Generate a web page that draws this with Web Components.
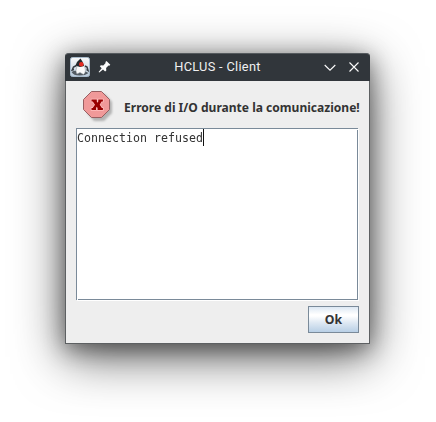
<!DOCTYPE html>
<html lang="it">
<head>
<meta charset="utf-8">
<title>HCLUS - Client</title>
<style>
html,body{margin:0;background:#fff}
body{width:436px;height:422px;overflow:hidden;box-sizing:border-box;padding:53px 0 0 65px;font-family:"Noto Sans",sans-serif}
</style>
</head>
<body>
<dialog-window>
  <title-bar slot="title">HCLUS - Client</title-bar>
  <error-message>Errore di I/O durante la comunicazione!</error-message>
  <text-pane>Connection refused</text-pane>
  <metal-button>Ok</metal-button>
</dialog-window>
<script>
const define = (name, html) => customElements.define(name, class extends HTMLElement {
  constructor() {
    super();
    this.attachShadow({mode: 'open'}).innerHTML = html;
  }
});

define('dialog-window', `<style>
:host{display:flex;flex-direction:column;box-sizing:border-box;width:305px;height:291px;background:#eee;border:1px solid #5d6062;border-top:0;border-radius:4px 4px 0 0;box-shadow:0 13px 50px rgba(0,0,0,.62),0 5px 22px rgba(0,0,0,.42)}
main{flex:1;display:flex;flex-direction:column;padding:0 10px 10px}
</style><slot name="title"></slot><main><slot></slot></main>`);

define('title-bar', `<style>
:host{display:grid;grid-template-columns:20px 20px 1fr 20px 20px;column-gap:4px;align-items:center;height:28px;box-sizing:border-box;margin:0 -1px;padding:0 5px;background:#31363b;border-top:1px solid #555a5e;border-radius:4px 4px 0 0;color:#eff0f1;font:12.800px/24px Roboto,sans-serif;letter-spacing:.3px}
span{text-align:center;white-space:nowrap;padding-bottom:2px}
svg{display:block;margin-top:-1px}
</style>
<svg width="20" height="20" viewBox="0 0 20 20">
<defs><linearGradient id="g" x2="0" y2="1"><stop stop-color="#fafafa"/><stop offset="1" stop-color="#b9cadb"/></linearGradient></defs>
<rect x=".5" y=".5" width="19" height="19" rx="2" fill="url(#g)" stroke="#a9bccd"/>
<path d="M1.500 15q3-2 6-1h7l4 2q-3 2.500-9 2.500-6 0-8-3.500z" fill="#40464c" opacity=".85"/>
<path d="M6.500 8.500L3.500 10l-1.300 3 1.800-.5M15 9l2 1 1 3.500-1.500-1" fill="none" stroke="#363d43" stroke-width="1.500"/>
<path d="M7 9q-2 5 0 8l3-1.500 3.500 2q3.500-3 .5-9z" fill="#fafafa" stroke="#8a9298" stroke-width=".5"/>
<path d="M10.500 1.500q2.500 3 3.500 7.500l-4 1-4.500-1.500q1-4 5-7z" fill="#24292d"/>
<circle cx="11.300" cy="7.300" r="2.300" fill="#e52b22"/>
</svg>
<svg width="20" height="20" viewBox="0 0 20 20"><path d="M12.500 4l3.800 3.800-1 1-.8-.2-2.400 2.300.2 2.500-1.200 1.100-2.100-2.100L5.300 15.600l-.7-.7 3.100-3.700-1.900-1.900L6.900 8.200l2.400.2 2.300-2.400-.2-.9z" fill="#fcfcfc"/></svg>
<span><slot></slot></span>
<svg width="20" height="20" viewBox="0 0 20 20"><path d="M3.700 8l5.300 5.200L14.300 8" fill="none" stroke="#fcfcfc" stroke-width="1.100"/></svg>
<svg width="20" height="20" viewBox="0 0 20 20"><path d="M4.500 5.500l9 9m0-9l-9 9" fill="none" stroke="#fcfcfc" stroke-width="1.100"/></svg>`);

define('error-message', `<style>
:host{display:flex;height:47px;color:#333;font-weight:700;font-size:12.050px;line-height:18px;white-space:nowrap}
svg{flex:none;width:32px;height:34px;margin:9px 10px 0 6px}
span{margin-top:18px}
</style>
<svg viewBox="0 0 32 34">
<defs><filter id="s" x="-30%" y="-30%" width="160%" height="160%"><feGaussianBlur stdDeviation="1.300"/></filter></defs>
<path d="M11 4h12l7 8v11l-8 8H12l-7-8V12z" fill="#777" opacity=".5" filter="url(#s)"/>
<path d="M9.500 1.500h10l8 8v10l-8 8h-10l-8-8v-10z" fill="#f09999" stroke="#985f61"/>
<path d="M9.500 9.500h5.300v2l.7 1.200.8-1.200v-2h4.600v2h-1.300l-1.900 3.200 2.200 3.300h1v2h-5.300v-2l-.8-1.300-.8 1.300v2H9.500v-2h1.200l2.300-3.300-2.200-3.200H9.500z" fill="#900" stroke="#ffc1c1" stroke-width="1.400" paint-order="stroke"/>
</svg><span><slot></slot></span>`);

define('text-pane', `<style>
:host{display:block;position:relative;box-sizing:border-box;width:282px;height:172px;background:#fff;border:1px solid #7a8a99;box-shadow:1px 1px 0 #fff;color:#333;font:12.600px/17px "DejaVu Sans Mono",monospace}
:host::before,:host::after{content:"";position:absolute;background:#fff;width:1px;height:1px}
:host::before{right:-1px;top:0}
:host::after{left:0;bottom:-1px}
div{display:flex;height:17px;white-space:pre}
span{width:126px;transform:scaleX(.923);transform-origin:0 0}
i{width:1px;height:17px;background:#111}
</style><div><span><slot></slot></span><i></i></div>`);

define('metal-button', `<style>
:host{display:block;box-sizing:border-box;align-self:flex-end;width:51px;height:27px;margin-top:6px;border:1px solid #7a8a99;background:linear-gradient(#dde8f3 0,#fff 30%,#fff 36%,#dfe9f3 62%,#b8cfe5 100%);color:#333;font-weight:700;font-size:12.300px;line-height:25px;text-align:center}
</style><slot></slot>`);
</script>
</body>
</html>
